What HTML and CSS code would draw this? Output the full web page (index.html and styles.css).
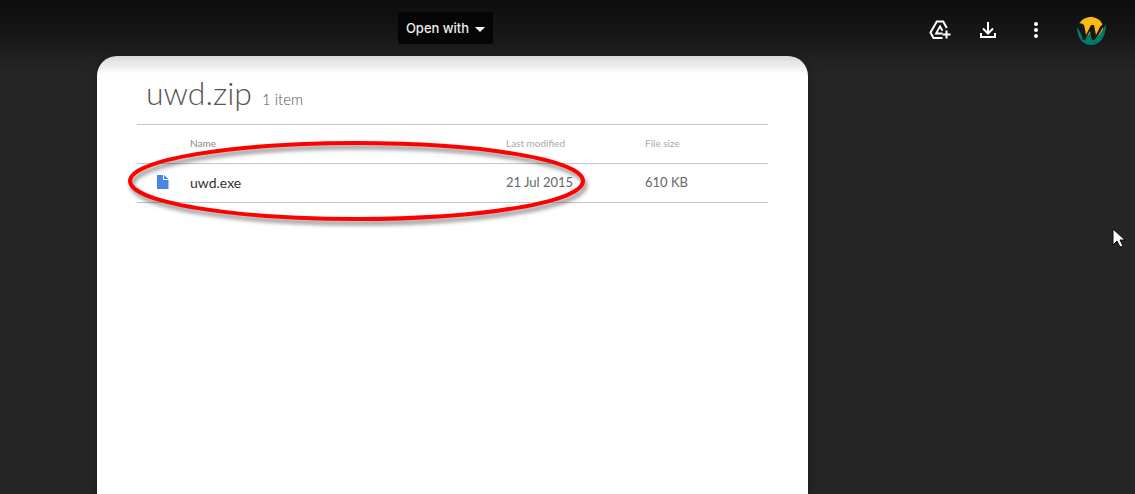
FILE: index.html
```html
<!DOCTYPE html>
<html lang="en">
<head>
<meta charset="utf-8">
<meta name="viewport" content="width=device-width, initial-scale=1">
<title>uwd.zip</title>
<link rel="stylesheet" href="styles.css">
</head>
<body>
<header class="toolbar">
  <button class="open-with" type="button">Open with
    <svg class="caret" viewBox="0 0 10 5" aria-hidden="true"><path d="M0 0h10L5 5z"/></svg>
  </button>
  <nav class="actions" aria-label="File actions">
    <button class="icon-button" type="button" aria-label="Add shortcut to Drive">
      <svg viewBox="0 0 24 24" fill="none" stroke="currentColor" stroke-width="2" aria-hidden="true">
        <path d="M14.500 20H5.500L2.500 14.500 8.800 3.500h6.400L18.800 10"/>
        <path d="M14.500 15.500H8L12 8.300l2.500 4.500" stroke-width="1.800"/>
        <path d="M18.500 12.500v8M14.500 16.500h8"/>
      </svg>
    </button>
    <button class="icon-button" type="button" aria-label="Download">
      <svg viewBox="0 0 24 24" fill="none" stroke="currentColor" stroke-width="2" aria-hidden="true"><path d="M12 4v11M7 10.500l5 5 5-5M5 15v4h14v-4"/></svg>
    </button>
    <button class="icon-button" type="button" aria-label="More actions">
      <svg viewBox="0 0 24 24" fill="currentColor" aria-hidden="true"><circle cx="12" cy="6" r="2"/><circle cx="12" cy="12" r="2"/><circle cx="12" cy="18" r="2"/></svg>
    </button>
    <button class="avatar" type="button" aria-label="Account">
      <svg viewBox="0 0 32 32" aria-hidden="true">
        <path d="M4 10C7 5 11 3 16 3c7 0 12 5 12 11 0 5-3 8-7 10H11z" fill="#fdb913"/>
        <path d="M2 13c2 3 4 6 6 12 3-1 6-4 8-8l3 8c5-2 8-8 12-15 0 13-6 21-15 21C8 31 2 24 2 13z" fill="#00796b"/>
        <path d="M0 10c3-1 6-1 8 0 2 2 2 6 3 11l5-10h3l2 10c3-5 3-8 6-10l3-1c-4 5-5 11-11 16h-2l-2-9-5 9H8C6 20 6 14 4 12c-1-1-2-1-4-1z" fill="#171717"/>
      </svg>
    </button>
  </nav>
</header>
<main class="viewer">
  <article class="sheet">
    <div class="heading"><h1 class="title">uwd.zip</h1><span class="count">1 item</span></div>
    <div class="listing">
      <table class="files">
        <colgroup><col class="col-icon"><col><col class="col-date"><col class="col-size"></colgroup>
        <thead>
          <tr><td></td><th class="name-head" scope="col">Name</th><th scope="col">Last modified</th><th scope="col">File size</th></tr>
        </thead>
        <tbody>
          <tr>
            <td class="file-icon"><svg viewBox="0 0 12 14" aria-hidden="true"><path d="M0 0h6v5h5.500v9H0zM7 0l4.500 4H7z" fill="#4a86e8"/></svg></td>
            <td class="file-name">uwd.exe</td><td>21 Jul 2015</td><td>610 KB</td>
          </tr>
        </tbody>
      </table>
      <svg class="marker" viewBox="0 0 457 80" aria-hidden="true"><ellipse cx="228.500" cy="40" rx="226.500" ry="38" fill="none" stroke="#f00" stroke-width="4"/></svg>
    </div>
  </article>
</main>
<svg class="pointer" viewBox="0 0 14 20" aria-hidden="true"><path d="M1 1v16l4-4 3 6 3-1-3-6h5z" fill="#fff" stroke="#08081c"/></svg>
</body>
</html>
```
FILE: styles.css
```css
* { box-sizing: border-box; }

body {
  margin: 0;
  min-height: 100vh;
  display: flex;
  flex-direction: column;
  background: #262626;
  color: #666;
  font-family: Lato, "Open Sans", sans-serif;
  font-size: 13px;
}

body::before {
  content: "";
  position: absolute;
  z-index: 1;
  inset: 0 0 auto;
  height: 74px;
  background: linear-gradient(rgba(0, 0, 0, 0.65), rgba(0, 0, 0, 0.4) 36px, rgba(0, 0, 0, 0.14) 57px, transparent);
  pointer-events: none;
}

.toolbar {
  position: relative;
  z-index: 2;
  height: 56px;
  padding: 0 28px 0 84px;
  display: grid;
  grid-template-columns: 1fr 300px;
  align-items: center;
}

button {
  border: 0;
  background: none;
  color: #fff;
  font: inherit;
}

.open-with {
  justify-self: center;
  height: 32px;
  padding: 0 8px;
  display: flex;
  align-items: center;
  gap: 6px;
  border-radius: 2px;
  background: #050505;
  color: #eee;
  font: 500 13px Inter, "Liberation Sans", sans-serif;
}

.caret {
  width: 10px;
  height: 5px;
  margin-top: 3px;
  fill: #fff;
}

.actions {
  display: flex;
  justify-content: flex-end;
  align-items: center;
  gap: 24px;
  padding-top: 4px;
}

.icon-button,
.icon-button svg {
  display: block;
  width: 24px;
  height: 24px;
  padding: 0;
}

.avatar,
.avatar svg {
  display: block;
  width: 32px;
  height: 32px;
  padding: 0;
}

.avatar { margin-left: 3px; }

.viewer {
  flex: 1;
  display: flex;
  padding: 0 327px 0 97px;
}

.sheet {
  flex: 1;
  min-width: 0;
  padding: 0 40px;
  border-radius: 20px 20px 0 0;
  background: #fff;
  box-shadow: 0 4px 14px rgba(0, 0, 0, 0.3);
}

.heading {
  height: 69px;
  padding: 18px 9px 0;
  display: flex;
  align-items: baseline;
  gap: 10px;
  border-bottom: 1px solid #c6c6c6;
}

.title {
  margin: 0;
  color: #555;
  font-size: 32px;
  font-weight: 300;
  line-height: 38px;
}

.count {
  color: #555;
  font-size: 15px;
  font-weight: 300;
}

.listing { position: relative; }

.files {
  width: 100%;
  table-layout: fixed;
  border-collapse: separate;
  border-spacing: 0;
  text-align: left;
}

.col-icon { width: 53px; }
.col-date { width: 139px; }
.col-size { width: 123px; }

.files th,
.files td {
  height: 39px;
  padding: 0 0 2px;
  border-bottom: 1px solid #c6c6c6;
}

.files th {
  color: #aaa;
  font-size: 10px;
  font-weight: 400;
}

.files .name-head { color: #888; }

.files .file-name {
  color: #333;
  font-size: 14px;
}

.files .file-icon { padding-left: 20px; }

.file-icon svg {
  display: block;
  width: 12px;
  height: 14px;
}

.marker {
  position: absolute;
  top: 16px;
  left: -9px;
  width: 457px;
  height: 80px;
  overflow: visible;
  filter: drop-shadow(2px 4px 2px rgba(0, 0, 0, 0.45));
  pointer-events: none;
}

.pointer {
  position: absolute;
  top: 228px;
  right: 9px;
  width: 14px;
  height: 20px;
}
```
